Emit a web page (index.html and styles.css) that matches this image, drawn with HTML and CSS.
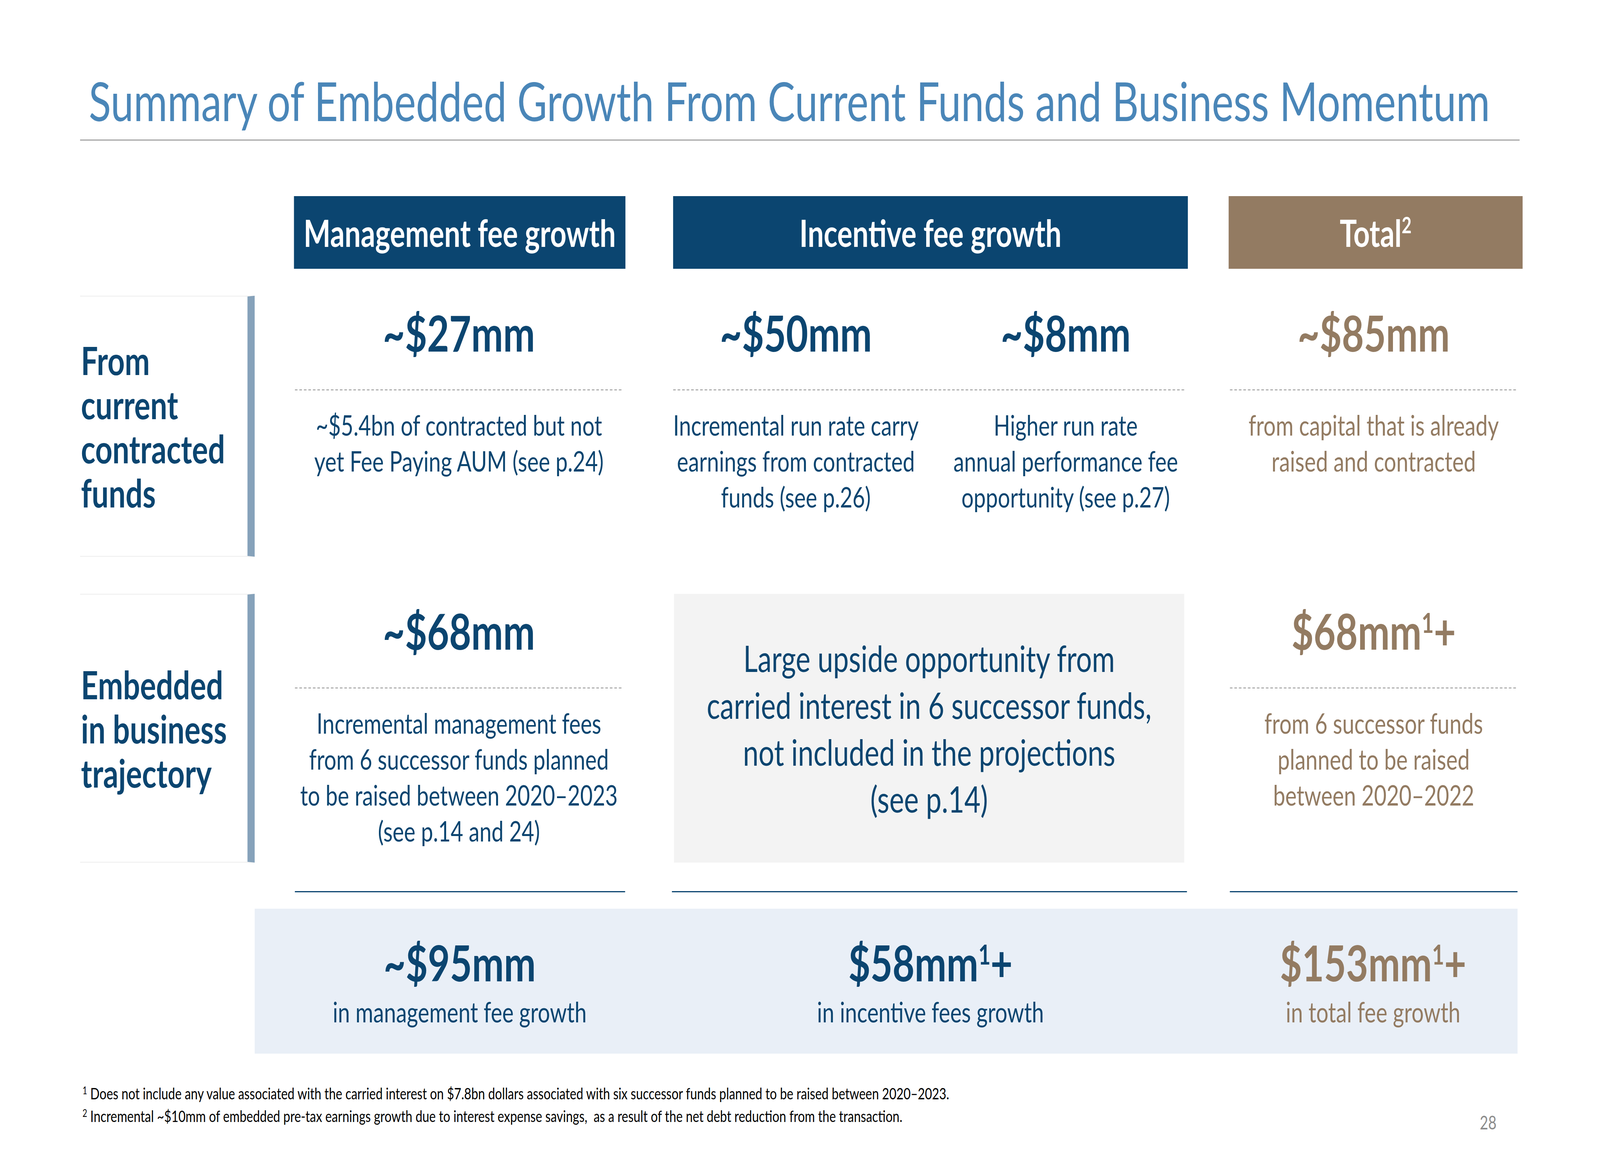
FILE: index.html
```html
<!DOCTYPE html>
<html lang="en">
<head>
<meta charset="utf-8">
<title>Summary of Embedded Growth</title>
<link rel="stylesheet" href="styles.css">
</head>
<body>
<div class="viewport">
<div class="slide">
  <header class="title-block">
    <h1 class="title">Summary of Embedded Growth From Current Funds and Business Momentum</h1>
  </header>

  <div class="cols head-row">
    <div class="hdr hdr-blue c-mgmt"><span>Management fee growth</span></div>
    <div class="hdr hdr-blue c-inc"><span>Incentive fee growth</span></div>
    <div class="hdr hdr-brown c-tot"><span>Total<sup class="hsup">2</sup></span></div>
  </div>

  <div class="cols row row1">
    <div class="label c-label"><span>From<br>current<br>contracted<br>funds</span></div>
    <div class="cell cell-mgmt c-mgmt">
      <div class="amt">~$27mm</div>
      <div class="dash"></div>
      <p class="desc">~$5.4bn of contracted but not<br>yet Fee Paying AUM (see p.24)</p>
    </div>
    <div class="cell inc-split c-inc">
      <div class="amt">~$50mm</div>
      <div class="amt">~$8mm</div>
      <div class="dash span-all"></div>
      <p class="desc">Incremental run rate carry<br>earnings from contracted<br>funds (see p.26)</p>
      <p class="desc">Higher run rate<br>annual performance fee<br>opportunity (see p.27)</p>
    </div>
    <div class="cell cell-tot c-tot">
      <div class="amt">~$85mm</div>
      <div class="dash"></div>
      <p class="desc">from capital that is already<br>raised and contracted</p>
    </div>
  </div>

  <div class="cols row row2">
    <div class="label c-label"><span>Embedded<br>in business<br>trajectory</span></div>
    <div class="cell cell-mgmt c-mgmt">
      <div class="amt">~$68mm</div>
      <div class="dash"></div>
      <p class="desc">Incremental management fees<br>from 6 successor funds planned<br>to be raised between 2020–2023<br>(see p.14 and 24)</p>
    </div>
    <div class="grey-box c-inc">
      <p class="grey-text">Large upside opportunity from<br>carried interest in 6 successor funds,<br>not included in the projections<br>(see p.14)</p>
    </div>
    <div class="cell cell-tot c-tot">
      <div class="amt">$68mm<sup class="sup">1</sup>+</div>
      <div class="dash"></div>
      <p class="desc">from 6 successor funds<br>planned to be raised<br>between 2020–2022</p>
    </div>
  </div>

  <div class="cols rules-row">
    <div class="solid solid-mgmt c-mgmt"></div>
    <div class="solid solid-inc c-inc"></div>
    <div class="solid solid-tot c-tot"></div>
  </div>

  <div class="band">
    <div class="band-item b-mgmt">
      <div class="amt">~$95mm</div>
      <div class="band-sub">in management fee growth</div>
    </div>
    <div class="band-item b-inc">
      <div class="amt">$58mm<sup class="sup">1</sup>+</div>
      <div class="band-sub">in incentive fees growth</div>
    </div>
    <div class="band-item b-tot">
      <div class="amt">$153mm<sup class="sup">1</sup>+</div>
      <div class="band-sub">in total fee growth</div>
    </div>
  </div>

  <footer class="footer">
    <div class="footnotes">
      <p><sup class="fsup">1</sup> Does not include any value associated with the carried interest on $7.8bn dollars associated with six successor funds planned to be raised between 2020–2023.</p>
      <p><sup class="fsup">2</sup> Incremental ~$10mm of embedded pre-tax earnings growth due to interest expense savings,&nbsp; as a result of the net debt reduction from the transaction.</p>
    </div>
    <div class="page-num">28</div>
  </footer>
</div>
</div>
<script src="app.js"></script>
</body>
</html>
```

FILE: styles.css
```css
:root {
  --blue: #0b4570;
  --brown: #937b62;
  --title: #4a86b8;
  --bar: #86a2ba;
  --sx: 1;
  --sy: 1;
}

html, body {
  margin: 0;
  padding: 0;
  background: #ffffff;
  overflow: hidden;
}

/* The slide is authored at 5334x3000 and fitted to the window */
.viewport {
  width: 100vw;
  height: 100vh;
  overflow: hidden;
}

.slide {
  width: 5334px;
  height: 3000px;
  box-sizing: border-box;
  padding: 172px 258px 0 267px;
  font-family: Lato, "Liberation Sans", sans-serif;
  background: #ffffff;
  overflow: hidden;
  transform-origin: 0 0;
  transform: scale(var(--sx), var(--sy));
}

/* Title */
.title-block {
  width: 4799px;
  box-sizing: border-box;
  padding: 0 0 15px 29px;
  border-bottom: 3px solid #a6a6a6;
}

.title {
  margin: 0;
  font-weight: 400;
  font-size: 137px;
  line-height: 170px;
  color: var(--title);
  white-space: nowrap;
}

/* Column grid shared by all rows */
.cols {
  display: grid;
  grid-template-columns: 582px 131px 1105px 159px 1716px 136px 980px;
}

.c-label { grid-column: 1; }
.c-mgmt { grid-column: 3; }
.c-inc { grid-column: 5; }
.c-tot { grid-column: 7; }

/* Header row */
.head-row {
  margin-top: 142px;
  height: 186px;
}

.hdr {
  display: flex;
  align-items: center;
  justify-content: center;
  color: #ffffff;
  font-weight: 700;
  font-size: 95px;
  line-height: 120px;
  white-space: nowrap;
}

.hdr-blue { background: var(--blue); }
.hdr-brown { background: var(--brown); }

.hsup {
  font-size: 0.6em;
  line-height: 0;
  vertical-align: 0.62em;
}

/* Body rows */
.row1 {
  margin-top: 69px;
  height: 668px;
}

.row2 {
  margin-top: 95px;
  height: 688px;
}

.label {
  display: flex;
  align-items: center;
  padding-left: 3px;
  border-top: 2px solid #ededed;
  border-bottom: 2px solid #ededed;
  border-right: 24px solid var(--bar);
  font-weight: 700;
  font-size: 100px;
  line-height: 113px;
  color: var(--blue);
}

.cell {
  text-align: center;
  color: var(--blue);
  padding-top: 14px;
}

.cell-mgmt {
  padding-left: 3px;
  padding-right: 8px;
}

.cell-tot {
  color: var(--brown);
  padding-left: 4px;
  padding-right: 17px;
}

.inc-split {
  display: grid;
  grid-template-columns: 1fr 1fr;
  column-gap: 92px;
  align-content: start;
  padding-right: 9px;
}

.span-all { grid-column: 1 / -1; }

.amt {
  font-weight: 700;
  font-size: 127px;
  line-height: 160px;
  white-space: nowrap;
}

.sup {
  font-size: 0.55em;
  line-height: 0;
  vertical-align: 0.62em;
}

.dash {
  height: 2px;
  margin-top: 66px;
  background-image: linear-gradient(to right, #8f8f8f 0 9px, transparent 9px);
  background-size: 15px 2px;
  background-repeat: repeat-x;
}

.desc {
  margin: 42px 0 0;
  font-size: 72px;
  line-height: 92px;
  white-space: nowrap;
}

.grey-box {
  margin: 0 12px 0 3px;
  background: #f3f3f3;
  display: flex;
  align-items: center;
  justify-content: center;
}

.grey-text {
  margin: 0;
  text-align: center;
  font-size: 93px;
  line-height: 120px;
  color: var(--blue);
  white-space: nowrap;
}

/* Solid rules */
.rules-row {
  margin-top: 73px;
  height: 3px;
}

.solid {
  border-top: 3px solid var(--blue);
}

.solid-mgmt { margin: 0 1px 0 3px; }
.solid-inc { margin: 0 3px 0 -4px; }
.solid-tot { margin: 0 17px 0 4px; }

/* Totals band */
.band {
  margin-top: 42px;
  margin-left: 582px;
  width: 4210px;
  height: 371px;
  background: #e9eff7;
  display: grid;
  grid-template-columns: 131px 1105px 159px 1716px 136px 963px;
}

.band-item {
  text-align: center;
  padding-top: 57px;
  color: var(--blue);
}

.b-mgmt { grid-column: 2; }
.b-inc { grid-column: 4; }
.b-tot { grid-column: 6; color: var(--brown); }

.band-sub {
  font-size: 72px;
  line-height: 92px;
  white-space: nowrap;
}

/* Footer */
.footer {
  margin-top: 73px;
  display: flex;
  justify-content: space-between;
  align-items: flex-end;
  padding-left: 8px;
  padding-right: 87px;
}

.footnotes p {
  margin: 0;
  font-size: 41px;
  line-height: 58px;
  color: #000000;
  white-space: nowrap;
}

.fsup {
  font-size: 0.65em;
  line-height: 0;
  vertical-align: 0.5em;
}

.page-num {
  font-size: 48px;
  line-height: 58px;
  color: #8c8c8c;
  margin-bottom: -16px;
}
```

FILE: app.js
```js
(function () {
  function fit() {
    var root = document.documentElement;
    root.style.setProperty('--sx', String(window.innerWidth / 5334));
    root.style.setProperty('--sy', String(window.innerHeight / 3000));
  }
  fit();
  window.addEventListener('resize', fit);
})();
```
